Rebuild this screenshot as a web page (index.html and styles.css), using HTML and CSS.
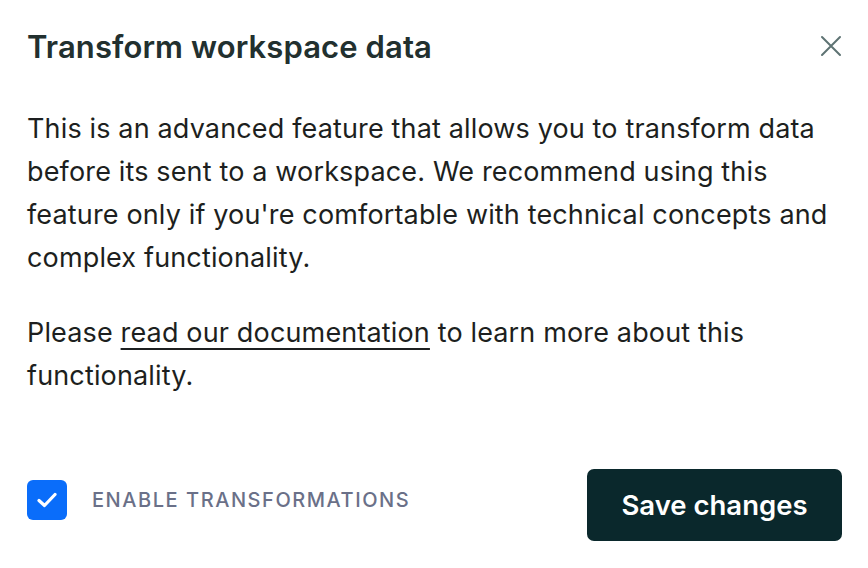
FILE: index.html
```html
<!DOCTYPE html>
<html lang="en">
<head>
    <meta charset="UTF-8">
    <meta name="viewport" content="width=device-width, initial-scale=1.0">
    <title>Transform workspace data</title>
    <link rel="stylesheet" href="styles.css">
</head>
<body>
    <div class="modal">
        <div class="modal-header">
            <h1>Transform workspace data</h1>
            <button class="close" aria-label="Close">
                <svg width="22" height="22" viewBox="0 0 22 22">
                    <path d="M2 2 L20 20 M20 2 L2 20" stroke="#5e7373" stroke-width="2" stroke-linecap="round"/>
                </svg>
            </button>
        </div>

        <div class="modal-body">
            <p>This is an advanced feature that allows you to transform data before its sent to a workspace. We recommend using this feature only if you're comfortable with technical concepts and complex functionality.</p>
            <p>Please <a href="#">read our documentation</a> to learn more about this functionality.</p>
        </div>

        <div class="modal-footer">
            <label class="toggle">
                <span class="checkbox">
                    <svg width="20" height="16" viewBox="0 0 20 16">
                        <path d="M2 8.5 L7.5 13.5 L18 2.5" fill="none" stroke="#fff" stroke-width="3.2" stroke-linecap="round" stroke-linejoin="round"/>
                    </svg>
                </span>
                <span class="toggle-label">Enable transformations</span>
            </label>
            <button class="save">Save changes</button>
        </div>
    </div>
</body>
</html>
```

FILE: styles.css
```css
body {
    margin: 0;
    font-family: 'Inter', 'Noto Sans', sans-serif;
    background-color: #fff;
    color: #1b1f1f;
}

.modal {
    padding: 27px 26px 27px 27px;
}

.modal-header {
    display: flex;
    justify-content: space-between;
    align-items: center;
    height: 38px;
}

.modal-header h1 {
    margin: 0;
    font-size: 31px;
    font-weight: 600;
    color: #22302f;
    letter-spacing: 0.1px;
}

.close {
    background: none;
    border: 0;
    padding: 0;
    width: 22px;
    height: 22px;
    cursor: pointer;
}

.modal-body {
    padding-top: 42px;
}

.modal-body p {
    margin: 0 0 32px;
    font-size: 27px;
    line-height: 43px;
    letter-spacing: 0.15px;
    color: #1d1f20;
}

.modal-body a {
    color: inherit;
    text-decoration: underline;
    text-underline-offset: 6px;
    text-decoration-thickness: 2px;
}

.modal-footer {
    display: flex;
    justify-content: space-between;
    align-items: center;
    margin-top: 71px;
}

.toggle {
    display: flex;
    align-items: center;
    gap: 25px;
    margin-top: -10px;
}

.checkbox {
    width: 40px;
    height: 40px;
    border-radius: 6px;
    background-color: #0a6dfa;
    display: flex;
    align-items: center;
    justify-content: center;
}

.toggle-label {
    text-transform: uppercase;
    font-size: 20px;
    font-weight: 500;
    letter-spacing: 1.55px;
    color: #6a7088;
}

.save {
    width: 255px;
    height: 72px;
    margin-top: 1px;
    border: 0;
    border-radius: 7px;
    background-color: #0a282c;
    color: #fff;
    font-family: inherit;
    font-size: 27.5px;
    font-weight: 600;
    cursor: pointer;
}
```
